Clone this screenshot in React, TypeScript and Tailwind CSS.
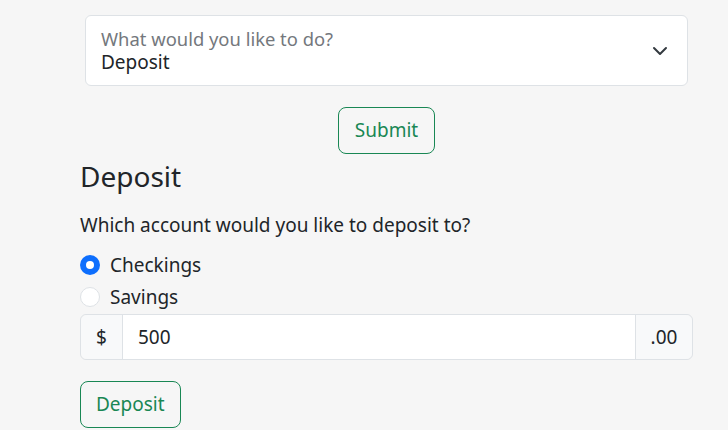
import { useState } from 'react'

export default function App() {
  const [account, setAccount] = useState('checkings')
  const [amount, setAmount] = useState('500')

  return (
    <div className="min-h-[430px] bg-[#f6f6f6] text-[#212529] font-['Noto_Sans',sans-serif]">
      <div className="pl-[80px] pr-[35px] pt-[15px]">
        <div className="mx-[5px]">
          <div className="relative h-[71px] rounded-[6px] border border-[#dee2e6] bg-white">
            <div className="absolute left-[15px] top-[12px] text-[18.4px] leading-[22px] text-[#74787d]">
              What would you like to do?
            </div>
            <div className="absolute left-[15px] top-[31px] text-[19px] leading-[30px]">
              Deposit
            </div>
            <svg
              className="absolute right-[19px] top-[27px]"
              width="16"
              height="16"
              viewBox="0 0 16 16"
              fill="none"
              stroke="#343a40"
              strokeWidth="2"
              strokeLinecap="round"
              strokeLinejoin="round"
            >
              <path d="M2 5l6 6 6-6" />
            </svg>
          </div>
          <div className="mt-[21px] flex justify-center">
            <button className="h-[47px] rounded-[8px] border border-[#198754] px-[16px] text-[19px] text-[#198754]">
              Submit
            </button>
          </div>
        </div>

        <h2 className="mt-[4px] text-[28px] leading-[36px]">Deposit</h2>
        <p className="mt-[16px] text-[19px] leading-[30px]">
          Which account would you like to deposit to?
        </p>

        <div className="mt-[9px] flex flex-col">
          {[
            ['checkings', 'Checkings'],
            ['savings', 'Savings'],
          ].map(([value, label]) => (
            <label
              key={value}
              className="flex h-[32px] items-center gap-[10px] text-[19px] leading-[30px]"
              onClick={() => setAccount(value)}
            >
              {account === value ? (
                <span className="flex size-[20px] items-center justify-center rounded-full bg-[#0d6efd]">
                  <span className="size-[8px] rounded-full bg-white" />
                </span>
              ) : (
                <span className="size-[20px] rounded-full border border-[#dee2e6] bg-white" />
              )}
              {label}
            </label>
          ))}
        </div>

        <div className="mt-px flex h-[46px] rounded-[6px] border border-[#dee2e6] text-[19px]">
          <span className="flex w-[42px] items-center justify-center rounded-l-[6px] border-r border-[#dee2e6] bg-[#f8f9fa]">
            $
          </span>
          <input
            className="min-w-0 flex-1 bg-white px-[15px] outline-none"
            value={amount}
            onChange={(e) => setAmount(e.target.value)}
          />
          <span className="flex w-[57px] items-center justify-center rounded-r-[6px] border-l border-[#dee2e6] bg-[#f8f9fa]">
            .00
          </span>
        </div>

        <button className="mt-[21px] h-[47px] rounded-[8px] border border-[#198754] px-[15px] text-[19px] text-[#198754]">
          Deposit
        </button>
      </div>
    </div>
  )
}
